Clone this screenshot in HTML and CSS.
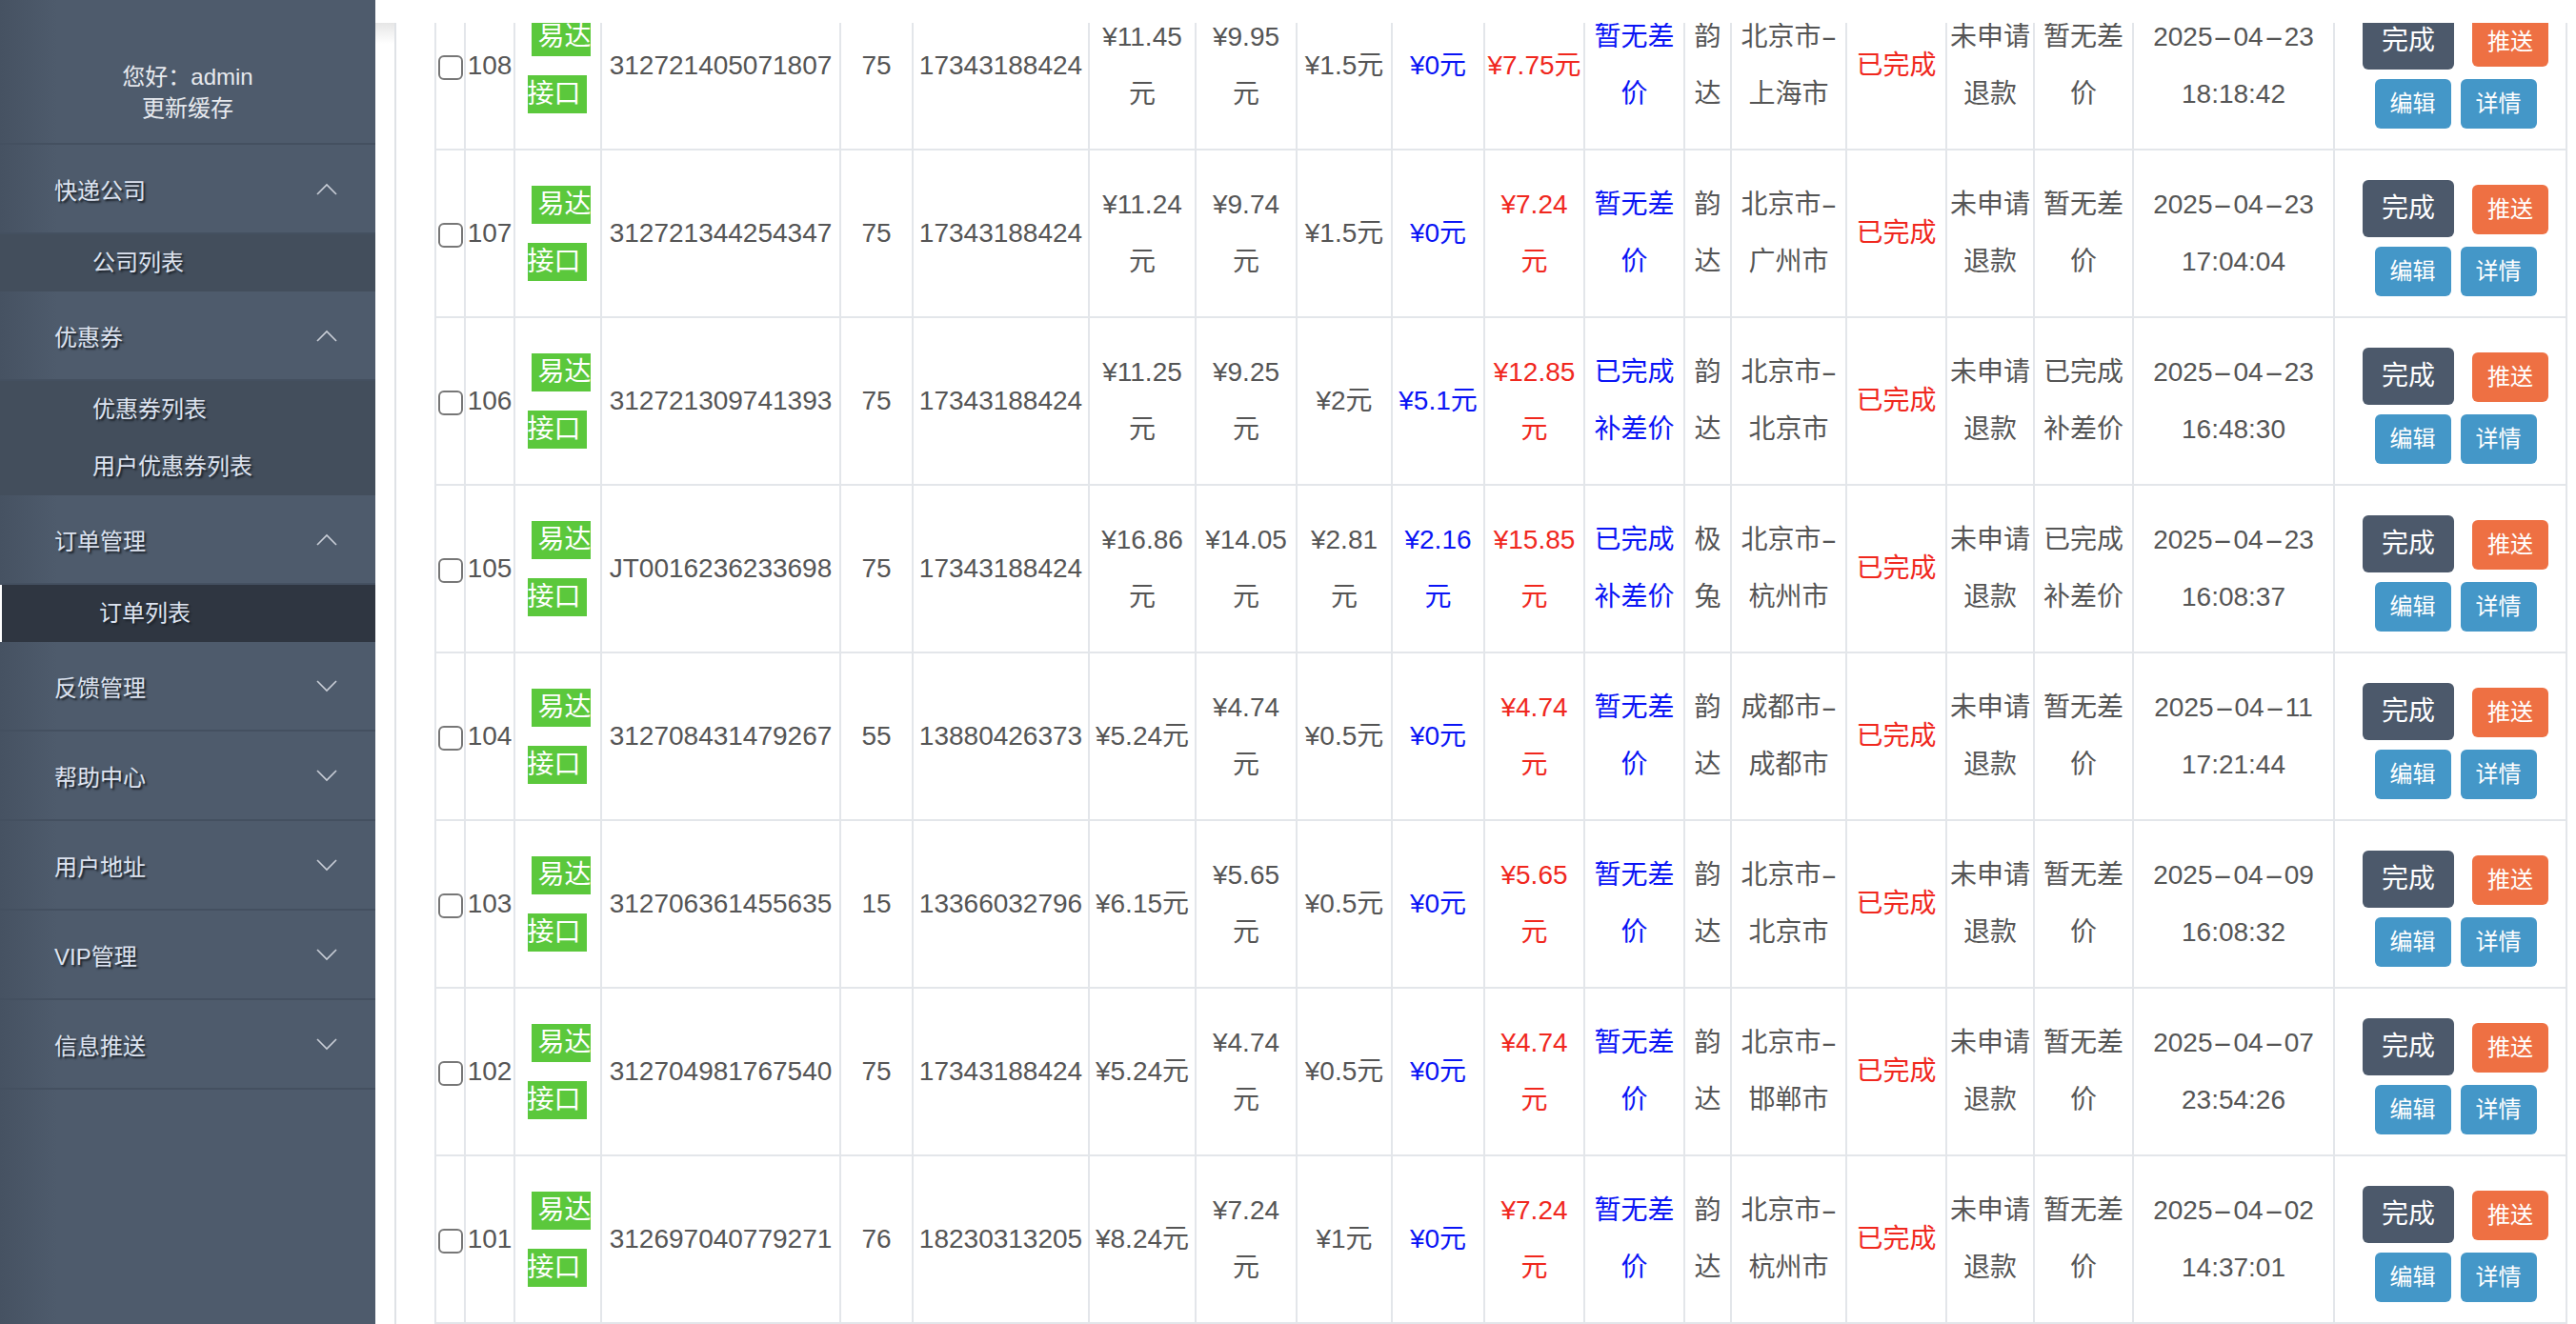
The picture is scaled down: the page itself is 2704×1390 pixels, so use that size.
FILE: index.html
```html
<!DOCTYPE html>
<html>
  <head>
    <meta charset="UTF-8">
    <title>订单列表</title>
    <link rel="stylesheet" href="styles.css">
  </head>
  <body>
    <div class="layout">
      <aside class="sidebar">
        <div class="hello">
          <div>您好：admin</div>
          <div>更新缓存</div>
        </div>
        <ul class="menu">
          <li>
            <div class="menu-title">快递公司 <svg class="arrow" viewBox="0 0 22 13"><polyline points="1,12 11,2 21,12"/></svg></div>
            <ul class="sub">
              <li>公司列表</li>
            </ul>
          </li>
          <li>
            <div class="menu-title">优惠券 <svg class="arrow" viewBox="0 0 22 13"><polyline points="1,12 11,2 21,12"/></svg></div>
            <ul class="sub">
              <li>优惠券列表</li>
              <li>用户优惠券列表</li>
            </ul>
          </li>
          <li>
            <div class="menu-title">订单管理 <svg class="arrow" viewBox="0 0 22 13"><polyline points="1,12 11,2 21,12"/></svg></div>
            <ul class="sub">
              <li class="active">订单列表</li>
            </ul>
          </li>
          <li><div class="menu-title">反馈管理 <svg class="arrow" viewBox="0 0 22 13"><polyline points="1,1 11,11 21,1"/></svg></div></li>
          <li><div class="menu-title">帮助中心 <svg class="arrow" viewBox="0 0 22 13"><polyline points="1,1 11,11 21,1"/></svg></div></li>
          <li><div class="menu-title">用户地址 <svg class="arrow" viewBox="0 0 22 13"><polyline points="1,1 11,11 21,1"/></svg></div></li>
          <li><div class="menu-title">VIP管理 <svg class="arrow" viewBox="0 0 22 13"><polyline points="1,1 11,11 21,1"/></svg></div></li>
          <li><div class="menu-title">信息推送 <svg class="arrow" viewBox="0 0 22 13"><polyline points="1,1 11,11 21,1"/></svg></div></li>
        </ul>
      </aside>

      <main class="main">
        <div class="topbar"></div>
        <div class="content">
          <div class="panel">
            <table class="orders">
              <colgroup>
                <col class="c1"><col class="c2"><col class="c3"><col class="c4"><col class="c5">
                <col class="c6"><col class="c7"><col class="c8"><col class="c9"><col class="c10">
                <col class="c11"><col class="c12"><col class="c13"><col class="c14"><col class="c15">
                <col class="c16"><col class="c17"><col class="c18"><col class="c19">
              </colgroup>
              <tbody>
                <tr>
                  <td><input type="checkbox" class="chk"></td>
                  <td>108</td>
                  <td><div class="tags"><span class="tag tag-a">易达</span><span class="tag tag-b">接口</span></div></td>
                  <td>312721405071807</td>
                  <td>75</td>
                  <td>17343188424</td>
                  <td>¥11.45<br>元</td>
                  <td>¥9.95<br>元</td>
                  <td>¥1.5元</td>
                  <td class="blue">¥0元</td>
                  <td class="red">¥7.75元</td>
                  <td class="blue">暂无差<br>价</td>
                  <td>韵<br>达</td>
                  <td>北京市<span class="dash short">-</span><br>上海市</td>
                  <td class="red">已完成</td>
                  <td>未申请<br>退款</td>
                  <td>暂无差<br>价</td>
                  <td>2025<span class="dash">-</span>04<span class="dash">-</span>23<br>18:18:42</td>
                  <td class="ops"><div class="ops-row"><a class="btn btn-done">完成</a><a class="btn btn-push">推送</a></div><div class="ops-row"><a class="btn btn-edit">编辑</a><a class="btn btn-info">详情</a></div></td>
                </tr>
                <tr>
                  <td><input type="checkbox" class="chk"></td>
                  <td>107</td>
                  <td><div class="tags"><span class="tag tag-a">易达</span><span class="tag tag-b">接口</span></div></td>
                  <td>312721344254347</td>
                  <td>75</td>
                  <td>17343188424</td>
                  <td>¥11.24<br>元</td>
                  <td>¥9.74<br>元</td>
                  <td>¥1.5元</td>
                  <td class="blue">¥0元</td>
                  <td class="red">¥7.24<br>元</td>
                  <td class="blue">暂无差<br>价</td>
                  <td>韵<br>达</td>
                  <td>北京市<span class="dash short">-</span><br>广州市</td>
                  <td class="red">已完成</td>
                  <td>未申请<br>退款</td>
                  <td>暂无差<br>价</td>
                  <td>2025<span class="dash">-</span>04<span class="dash">-</span>23<br>17:04:04</td>
                  <td class="ops"><div class="ops-row"><a class="btn btn-done">完成</a><a class="btn btn-push">推送</a></div><div class="ops-row"><a class="btn btn-edit">编辑</a><a class="btn btn-info">详情</a></div></td>
                </tr>
                <tr>
                  <td><input type="checkbox" class="chk"></td>
                  <td>106</td>
                  <td><div class="tags"><span class="tag tag-a">易达</span><span class="tag tag-b">接口</span></div></td>
                  <td>312721309741393</td>
                  <td>75</td>
                  <td>17343188424</td>
                  <td>¥11.25<br>元</td>
                  <td>¥9.25<br>元</td>
                  <td>¥2元</td>
                  <td class="blue">¥5.1元</td>
                  <td class="red">¥12.85<br>元</td>
                  <td class="blue">已完成<br>补差价</td>
                  <td>韵<br>达</td>
                  <td>北京市<span class="dash short">-</span><br>北京市</td>
                  <td class="red">已完成</td>
                  <td>未申请<br>退款</td>
                  <td>已完成<br>补差价</td>
                  <td>2025<span class="dash">-</span>04<span class="dash">-</span>23<br>16:48:30</td>
                  <td class="ops"><div class="ops-row"><a class="btn btn-done">完成</a><a class="btn btn-push">推送</a></div><div class="ops-row"><a class="btn btn-edit">编辑</a><a class="btn btn-info">详情</a></div></td>
                </tr>
                <tr>
                  <td><input type="checkbox" class="chk"></td>
                  <td>105</td>
                  <td><div class="tags"><span class="tag tag-a">易达</span><span class="tag tag-b">接口</span></div></td>
                  <td>JT0016236233698</td>
                  <td>75</td>
                  <td>17343188424</td>
                  <td>¥16.86<br>元</td>
                  <td>¥14.05<br>元</td>
                  <td>¥2.81<br>元</td>
                  <td class="blue">¥2.16<br>元</td>
                  <td class="red">¥15.85<br>元</td>
                  <td class="blue">已完成<br>补差价</td>
                  <td>极<br>兔</td>
                  <td>北京市<span class="dash short">-</span><br>杭州市</td>
                  <td class="red">已完成</td>
                  <td>未申请<br>退款</td>
                  <td>已完成<br>补差价</td>
                  <td>2025<span class="dash">-</span>04<span class="dash">-</span>23<br>16:08:37</td>
                  <td class="ops"><div class="ops-row"><a class="btn btn-done">完成</a><a class="btn btn-push">推送</a></div><div class="ops-row"><a class="btn btn-edit">编辑</a><a class="btn btn-info">详情</a></div></td>
                </tr>
                <tr>
                  <td><input type="checkbox" class="chk"></td>
                  <td>104</td>
                  <td><div class="tags"><span class="tag tag-a">易达</span><span class="tag tag-b">接口</span></div></td>
                  <td>312708431479267</td>
                  <td>55</td>
                  <td>13880426373</td>
                  <td>¥5.24元</td>
                  <td>¥4.74<br>元</td>
                  <td>¥0.5元</td>
                  <td class="blue">¥0元</td>
                  <td class="red">¥4.74<br>元</td>
                  <td class="blue">暂无差<br>价</td>
                  <td>韵<br>达</td>
                  <td>成都市<span class="dash short">-</span><br>成都市</td>
                  <td class="red">已完成</td>
                  <td>未申请<br>退款</td>
                  <td>暂无差<br>价</td>
                  <td>2025<span class="dash">-</span>04<span class="dash">-</span>11<br>17:21:44</td>
                  <td class="ops"><div class="ops-row"><a class="btn btn-done">完成</a><a class="btn btn-push">推送</a></div><div class="ops-row"><a class="btn btn-edit">编辑</a><a class="btn btn-info">详情</a></div></td>
                </tr>
                <tr>
                  <td><input type="checkbox" class="chk"></td>
                  <td>103</td>
                  <td><div class="tags"><span class="tag tag-a">易达</span><span class="tag tag-b">接口</span></div></td>
                  <td>312706361455635</td>
                  <td>15</td>
                  <td>13366032796</td>
                  <td>¥6.15元</td>
                  <td>¥5.65<br>元</td>
                  <td>¥0.5元</td>
                  <td class="blue">¥0元</td>
                  <td class="red">¥5.65<br>元</td>
                  <td class="blue">暂无差<br>价</td>
                  <td>韵<br>达</td>
                  <td>北京市<span class="dash short">-</span><br>北京市</td>
                  <td class="red">已完成</td>
                  <td>未申请<br>退款</td>
                  <td>暂无差<br>价</td>
                  <td>2025<span class="dash">-</span>04<span class="dash">-</span>09<br>16:08:32</td>
                  <td class="ops"><div class="ops-row"><a class="btn btn-done">完成</a><a class="btn btn-push">推送</a></div><div class="ops-row"><a class="btn btn-edit">编辑</a><a class="btn btn-info">详情</a></div></td>
                </tr>
                <tr>
                  <td><input type="checkbox" class="chk"></td>
                  <td>102</td>
                  <td><div class="tags"><span class="tag tag-a">易达</span><span class="tag tag-b">接口</span></div></td>
                  <td>312704981767540</td>
                  <td>75</td>
                  <td>17343188424</td>
                  <td>¥5.24元</td>
                  <td>¥4.74<br>元</td>
                  <td>¥0.5元</td>
                  <td class="blue">¥0元</td>
                  <td class="red">¥4.74<br>元</td>
                  <td class="blue">暂无差<br>价</td>
                  <td>韵<br>达</td>
                  <td>北京市<span class="dash short">-</span><br>邯郸市</td>
                  <td class="red">已完成</td>
                  <td>未申请<br>退款</td>
                  <td>暂无差<br>价</td>
                  <td>2025<span class="dash">-</span>04<span class="dash">-</span>07<br>23:54:26</td>
                  <td class="ops"><div class="ops-row"><a class="btn btn-done">完成</a><a class="btn btn-push">推送</a></div><div class="ops-row"><a class="btn btn-edit">编辑</a><a class="btn btn-info">详情</a></div></td>
                </tr>
                <tr>
                  <td><input type="checkbox" class="chk"></td>
                  <td>101</td>
                  <td><div class="tags"><span class="tag tag-a">易达</span><span class="tag tag-b">接口</span></div></td>
                  <td>312697040779271</td>
                  <td>76</td>
                  <td>18230313205</td>
                  <td>¥8.24元</td>
                  <td>¥7.24<br>元</td>
                  <td>¥1元</td>
                  <td class="blue">¥0元</td>
                  <td class="red">¥7.24<br>元</td>
                  <td class="blue">暂无差<br>价</td>
                  <td>韵<br>达</td>
                  <td>北京市<span class="dash short">-</span><br>杭州市</td>
                  <td class="red">已完成</td>
                  <td>未申请<br>退款</td>
                  <td>暂无差<br>价</td>
                  <td>2025<span class="dash">-</span>04<span class="dash">-</span>02<br>14:37:01</td>
                  <td class="ops"><div class="ops-row"><a class="btn btn-done">完成</a><a class="btn btn-push">推送</a></div><div class="ops-row"><a class="btn btn-edit">编辑</a><a class="btn btn-info">详情</a></div></td>
                </tr>
              </tbody>
            </table>
          </div>
        </div>
      </main>
    </div>
  </body>
</html>
```

FILE: styles.css
```css
* {
  box-sizing: border-box;
}
html, body {
  margin: 0;
  height: 100%;
}
body {
  font-family: "Liberation Sans", "Noto Sans CJK SC", sans-serif;
  background-color: #ffffff;
  overflow: hidden;
}
.layout {
  display: flex;
  height: 100vh;
}

/* sidebar */
.sidebar {
  width: 394px;
  flex: none;
  background: linear-gradient(to right, #465262, #4e5b6c 60px);
  color: #dde3f0;
  font-size: 24px;
}
.hello {
  height: 152px;
  padding-top: 43px;
  display: flex;
  flex-direction: column;
  justify-content: center;
  align-items: center;
  line-height: 33px;
  color: #e6e9ee;
  border-bottom: 2px solid #445060;
}
.menu, .sub {
  list-style: none;
  margin: 0;
  padding: 0;
}
.menu-title {
  height: 94px;
  display: flex;
  align-items: center;
  justify-content: space-between;
  padding: 0 40px 0 57px;
  border-bottom: 2px solid #445060;
  text-shadow: 2px 2px 2px #1c222a;
}
.arrow {
  width: 22px;
  height: 13px;
  fill: none;
  stroke: #c9ced7;
  stroke-width: 1.6;
}
.sub {
  background-color: #434e5c;
}
.sub li {
  height: 60px;
  line-height: 60px;
  padding-left: 97px;
  text-shadow: 2px 2px 2px #1c222a;
}
.sub li.active {
  background-color: #2f3641;
  border-left: 2px solid #ffffff;
  padding-left: 102px;
}

/* main */
.main {
  flex: 1;
  min-width: 0;
  display: flex;
  flex-direction: column;
}
.topbar {
  height: 24px;
  flex: none;
  background-color: #ffffff;
}
.content {
  flex: 1;
  min-height: 0;
  display: flex;
  overflow: hidden;
  padding-left: 20px;
  background: linear-gradient(#e6e6e6, #ffffff 22px) no-repeat;
}
.panel {
  flex: 1;
  min-width: 0;
  border-left: 2px solid #dfe2e6;
  background-color: #ffffff;
  padding-left: 40px;
}

/* table */
.orders {
  border-collapse: separate;
  border-spacing: 0;
  table-layout: fixed;
  width: 2239px;
  margin-top: -42px;
  font-size: 28px;
  color: #555555;
}
.orders tr {
  height: 176px;
}
.orders td {
  padding: 0;
  border-right: 2px solid #e3e6ea;
  border-bottom: 2px solid #e3e6ea;
  text-align: center;
  vertical-align: middle;
  line-height: 60px;
  white-space: nowrap;
}
.orders td:first-child {
  border-left: 2px solid #e3e6ea;
}
.c1 { width: 33px; }
.c2 { width: 52px; }
.c3 { width: 91px; }
.c4 { width: 251px; }
.c5 { width: 76px; }
.c6 { width: 185px; }
.c7 { width: 112px; }
.c8 { width: 106px; }
.c9 { width: 100px; }
.c10 { width: 97px; }
.c11 { width: 105px; }
.c12 { width: 105px; }
.c13 { width: 49px; }
.c14 { width: 121px; }
.c15 { width: 105px; }
.c16 { width: 92px; }
.c17 { width: 104px; }
.c18 { width: 211px; }
.c19 { width: 244px; }

.orders td.red {
  color: #f0281e;
}
.orders td.blue {
  color: #0a14f5;
}

/* the dashes in dates and routes are drawn wide */
.dash {
  display: inline-block;
  width: 22px;
  text-align: center;
  transform: scaleX(2.2);
}
.dash.short {
  width: 16px;
  transform: scaleX(1.8);
}

.chk {
  -webkit-appearance: none;
  appearance: none;
  width: 26px;
  height: 26px;
  margin: 0;
  border: 2px solid #777777;
  border-radius: 6px;
  background-color: #ffffff;
  vertical-align: middle;
}

.tags {
  display: flex;
  flex-direction: column;
  align-items: center;
  gap: 20px;
}
.tag {
  display: block;
  width: 62px;
  height: 40px;
  line-height: 40px;
  background-color: #5bc83c;
  color: #ffffff;
  text-align: left;
}
.tag-a {
  padding-left: 7px;
  margin-left: 6px;
}
.tag-b {
  margin-right: 2px;
}

.orders td.ops {
  padding: 10px 0 0 11px;
}
.ops-row {
  display: flex;
  justify-content: center;
  align-items: baseline;
}
.ops-row + .ops-row {
  margin-top: 10px;
}
.btn {
  display: block;
  color: #ffffff;
  border-radius: 6px;
  text-align: center;
  width: 80px;
  height: 52px;
  line-height: 52px;
  font-size: 24px;
}
.btn-done {
  width: 96px;
  height: 60px;
  line-height: 60px;
  font-size: 28px;
  background-color: #4c596b;
  margin-right: 19px;
}
.btn-push {
  background-color: #ee7043;
}
.btn-edit, .btn-info {
  background-color: #4497c8;
}
.btn-edit {
  margin-right: 10px;
}
```
